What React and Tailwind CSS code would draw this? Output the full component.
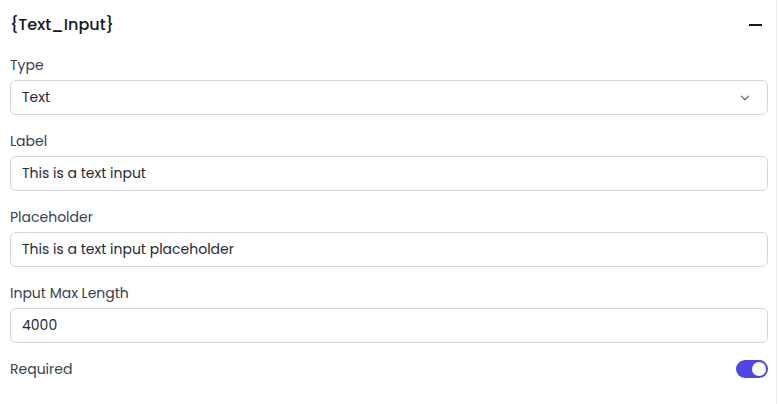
import React, { useState } from "react";

const font = { fontFamily: "Poppins, Inter, 'Noto Sans', sans-serif" };

function Field({ label, children }) {
  return (
    <div className="flex flex-col">
      <label className="text-[14px] leading-[20px] text-[#374151]">{label}</label>
      <div className="mt-[5px]">{children}</div>
    </div>
  );
}

function TextBox({ value }) {
  return (
    <div className="h-[35px] w-full rounded-[6px] border border-[#d4d4dc] bg-white px-[11px] flex items-center text-[14px] text-[#1f2937]">
      {value}
    </div>
  );
}

export default function App() {
  const [required, setRequired] = useState(true);

  return (
    <div className="w-[778px] h-[404px] bg-white" style={font}>
      <div className="w-[777px] h-full border-r border-[#f0f0f2] pl-[10px]">
        <div className="w-[758px]">
          <div className="flex items-center justify-between h-[49px] pt-[1px]">
            <h2 className="text-[16px] font-medium text-[#111827]">{"{Text_Input}"}</h2>
            <span className="block w-[13px] h-[2px] bg-[#111827] mr-[6px]" />
          </div>

          <div className="flex flex-col gap-[16px] pt-[6px]">
            <Field label="Type">
              <div className="h-[35px] w-full rounded-[6px] border border-[#d4d4dc] bg-white pl-[11px] pr-[15px] flex items-center justify-between text-[14px] text-[#1f2937]">
                <span>Text</span>
                <svg width="14" height="14" viewBox="0 0 24 24" fill="none" stroke="#6b7280" strokeWidth="2.2" strokeLinecap="round" strokeLinejoin="round">
                  <path d="M6 9l6 6 6-6" />
                </svg>
              </div>
            </Field>
            <Field label="Label">
              <TextBox value="This is a text input" />
            </Field>
            <Field label="Placeholder">
              <TextBox value="This is a text input placeholder" />
            </Field>
            <Field label="Input Max Length">
              <TextBox value="4000" />
            </Field>
            <div className="flex items-center justify-between h-[20px]">
              <span className="text-[14px] text-[#374151]">Required</span>
              <button
                onClick={() => setRequired(!required)}
                className={`relative w-[32px] h-[18px] rounded-full ${required ? "bg-[#4f46e5]" : "bg-gray-300"}`}
              >
                <span
                  className={`absolute top-[2px] w-[14px] h-[14px] rounded-full bg-white ${required ? "left-[16px]" : "left-[2px]"}`}
                />
              </button>
            </div>
          </div>
        </div>
      </div>
    </div>
  );
}
